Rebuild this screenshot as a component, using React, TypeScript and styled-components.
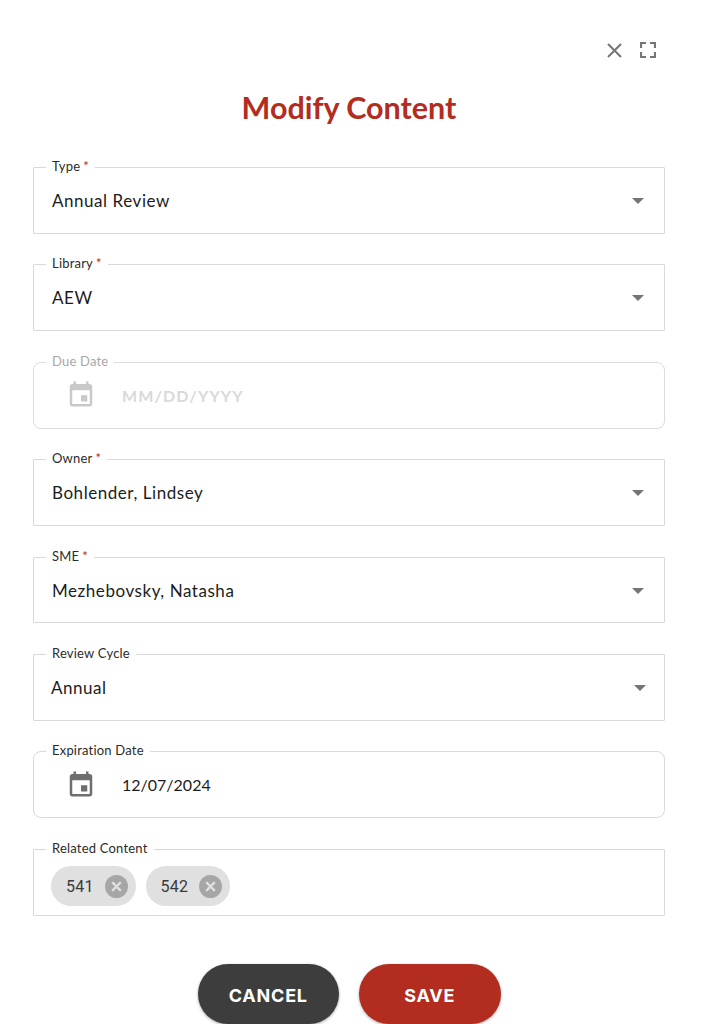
import React from "react";
import styled, { createGlobalStyle } from "styled-components";

const GlobalStyle = createGlobalStyle`
  html, body {
    margin: 0;
    padding: 0;
    background: #fff;
    font-family: "Lato", "Liberation Sans", sans-serif;
  }
`;

const Dialog = styled.div`
  width: 702px;
  height: 1024px;
  box-sizing: border-box;
  padding: 38px 37px 0 33px;
  overflow: hidden;
`;

const TopBar = styled.div`
  display: flex;
  justify-content: flex-end;
  align-items: center;
  gap: 14px;
  height: 24px;
  padding-right: 8px;
`;

const IconButton = styled.button`
  display: flex;
  align-items: center;
  justify-content: center;
  width: 19px;
  height: 24px;
  padding: 0;
  border: 0;
  background: none;
`;

const Title = styled.h1`
  margin: 28px 0 0;
  height: 38px;
  line-height: 35px;
  text-align: center;
  font-size: 30.5px;
  font-weight: 700;
  color: #b22d20;
`;

const Form = styled.div`
  margin-top: 39px;
  display: flex;
  flex-direction: column;
  gap: 30.5px;
`;

const Field = styled.div<{ $rounded?: boolean; $disabled?: boolean; $wide?: boolean }>`
  position: relative;
  height: 66.9px;
  box-sizing: border-box;
  border: 1px solid ${(p) => (p.$disabled ? "#dcdcdc" : "#d9d9d9")};
  border-radius: ${(p) => (p.$rounded ? "8px" : "1px")};
  display: flex;
  align-items: center;
  padding: ${(p) => (p.$wide ? "0 18px 0 17px" : "0 20px 0 18px")};
`;

const Legend = styled.label<{ $disabled?: boolean }>`
  position: absolute;
  top: -10px;
  left: 12px;
  padding: 0 6px;
  background: #fff;
  font-size: 13px;
  line-height: 16px;
  color: ${(p) => (p.$disabled ? "#a8a8a8" : "#2b2b2b")};
  letter-spacing: 0.2px;
`;

const Required = styled.span`
  color: #b22d20;
  margin-left: 3px;
  font-size: 13px;
`;

const Value = styled.span`
  flex: 1;
  font-size: 17px;
  color: #1c1c1c;
  letter-spacing: 0.55px;
`;

const DateIcon = styled.span`
  display: flex;
  margin: -2px 26px 0 14px;
`;

const DateValue = styled.span<{ $placeholder?: boolean }>`
  font-size: 16px;
  letter-spacing: ${(p) => (p.$placeholder ? "1.1px" : "0")};
  font-weight: ${(p) => (p.$placeholder ? 700 : 400)};
  color: ${(p) => (p.$placeholder ? "#d9d9d9" : "#1c1c1c")};
`;

const Arrow = styled.span`
  width: 0;
  height: 0;
  margin-top: 1px;
  border-left: 6px solid transparent;
  border-right: 6px solid transparent;
  border-top: 6px solid #757575;
`;

const Chips = styled.div`
  display: flex;
  gap: 10px;
  margin-top: 8px;
  margin-left: -1px;
`;

const Chip = styled.div`
  display: flex;
  align-items: center;
  height: 40px;
  box-sizing: border-box;
  padding: 0 8px 0 15px;
  gap: 11px;
  border-radius: 20px;
  background: #e0e0e0;
  font-family: "Roboto", sans-serif;
  font-size: 16px;
  letter-spacing: 0.2px;
  color: #3a3a3a;
`;

const ChipIcon = styled.svg`
  width: 23px;
  height: 23px;
  display: block;
`;

const Actions = styled.div`
  margin-top: 48px;
  display: flex;
  justify-content: center;
  gap: 20px;
`;

const ActionButton = styled.button<{ $primary?: boolean }>`
  width: 141.5px;
  height: 60px;
  border: 0;
  padding: 3px 0 0;
  border-radius: 30px;
  background: ${(p) => (p.$primary ? "#b22d20" : "#3d3d3d")};
  color: #fff;
  font-family: "Inter", sans-serif;
  font-size: 18px;
  font-weight: 700;
  letter-spacing: 0.8px;
  box-shadow: 0 1px 3px rgba(0, 0, 0, 0.35);
`;

const CalendarIcon = ({ color }: { color: string }) => (
  <svg width="30" height="30" viewBox="0 0 24 24" fill={color}>
    <path d="M19 4h-1V2h-2v2H8V2H6v2H5c-1.1 0-2 .9-2 2v14c0 1.1.9 2 2 2h14c1.1 0 2-.9 2-2V6c0-1.1-.9-2-2-2zm0 16H5V9h14v11zm-7-7h5v5h-5z" />
  </svg>
);

const ChipClose = () => (
  <ChipIcon viewBox="0 0 24 24">
    <circle cx="12" cy="12" r="12" fill="#a6a6a6" />
    <path d="M7.5 7.5l9 9M16.5 7.5l-9 9" stroke="#e0e0e0" strokeWidth="2.4" fill="none" />
  </ChipIcon>
);

const selects = [
  { label: "Type", value: "Annual Review", required: true },
  { label: "Library", value: "AEW", required: true },
];
const people = [
  { label: "Owner", value: "Bohlender, Lindsey", required: true },
  { label: "SME", value: "Mezhebovsky, Natasha", required: true },
  { label: "Review Cycle", value: "Annual", required: false, wide: true },
];

const SelectField = ({
  label,
  value,
  required,
  wide,
}: {
  label: string;
  value: string;
  required: boolean;
  wide?: boolean;
}) => (
  <Field $wide={wide}>
    <Legend>
      {label}
      {required && <Required>*</Required>}
    </Legend>
    <Value>{value}</Value>
    <Arrow />
  </Field>
);

export default function App() {
  return (
    <Dialog>
      <GlobalStyle />
      <TopBar>
        <IconButton>
          <svg width="19" height="19" viewBox="0 0 19 19">
            <path d="M3 3l13 13M16 3L3 16" stroke="#757575" strokeWidth="2" fill="none" />
          </svg>
        </IconButton>
        <IconButton>
          <svg width="16" height="16" viewBox="0 0 16 16">
            <path d="M1 6V1h5M10 1h5v5M15 10v5h-5M6 15H1v-5" stroke="#757575" strokeWidth="2.2" fill="none" />
          </svg>
        </IconButton>
      </TopBar>
      <Title>Modify Content</Title>
      <Form>
        {selects.map((s) => (
          <SelectField key={s.label} {...s} />
        ))}
        <Field $rounded $disabled>
          <Legend $disabled>Due Date</Legend>
          <DateIcon>
            <CalendarIcon color="#c9c9c9" />
          </DateIcon>
          <DateValue $placeholder>MM/DD/YYYY</DateValue>
        </Field>
        {people.map((s) => (
          <SelectField key={s.label} {...s} />
        ))}
        <Field $rounded>
          <Legend>Expiration Date</Legend>
          <DateIcon>
            <CalendarIcon color="#6e6e6e" />
          </DateIcon>
          <DateValue>12/07/2024</DateValue>
        </Field>
        <Field>
          <Legend>Related Content</Legend>
          <Chips>
            <Chip>
              541
              <ChipClose />
            </Chip>
            <Chip>
              542
              <ChipClose />
            </Chip>
          </Chips>
        </Field>
      </Form>
      <Actions>
        <ActionButton>CANCEL</ActionButton>
        <ActionButton $primary>SAVE</ActionButton>
      </Actions>
    </Dialog>
  );
}
